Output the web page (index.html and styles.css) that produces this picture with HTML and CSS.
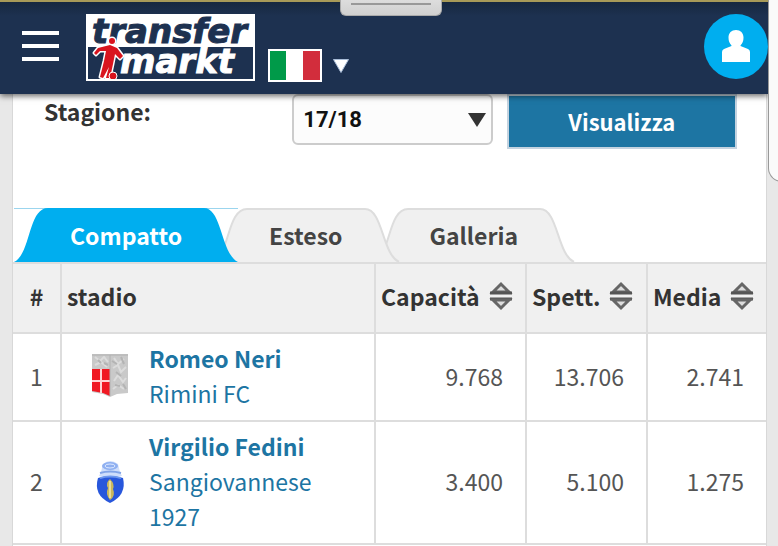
FILE: index.html
```
<!DOCTYPE html>
<html lang="it">
<head>
<meta charset="utf-8">
<meta name="viewport" content="width=device-width, initial-scale=1">
<title>Stadi - Transfermarkt</title>
<link rel="stylesheet" href="styles.css">
</head>
<body>
<header class="topbar">
  <button class="menu" type="button" aria-label="Menu"><span class="bar"></span><span class="bar"></span><span class="bar"></span></button>
  <a class="logo" href="#" aria-label="transfermarkt">
    <svg width="169" height="67" viewBox="0 0 169 67">
      <rect width="169" height="67" fill="#fff"/>
      <rect x="2" y="33" width="165" height="32" fill="#1d3150"/>
      <text class="logo-text" x="6" y="29" fill="#1d3150" stroke="#1d3150">transfer</text>
      <text class="logo-text" x="34" y="59" fill="#fff" stroke="#fff">markt</text>
      <g stroke="#fff" stroke-width="3" stroke-linejoin="round" stroke-linecap="round" fill="#fff">
        <circle cx="26" cy="27" r="3"/>
        <path d="M24 31L12 34L8 39L10 41L14 37L20 37L18 47L14 63L17 64L23 53L20 64L24 64L27 50L29 40L34 45L37 42L31 34Z"/>
      </g>
      <circle cx="26" cy="27" r="3" fill="#d9141e"/>
      <path d="M24 31L12 34L8 39L10 41L14 37L20 37L18 47L14 63L17 64L23 53L20 64L24 64L27 50L29 40L34 45L37 42L31 34Z" fill="#d9141e"/>
      <circle cx="27" cy="62" r="4" fill="#d9141e" stroke="#fff"/>
      <rect x="1" y="1" width="167" height="65" fill="none" stroke="#fff" stroke-width="2"/>
    </svg>
  </a>
  <button class="language" type="button" aria-label="Italia">
    <svg width="54" height="33" viewBox="0 0 54 33"><path fill="#fff" d="M0 0h54v33H0z"/><path fill="#009a49" d="M2 2h16v29H2z"/><path fill="#d22d3c" d="M35 2h17v29H35z"/></svg>
    <svg width="16" height="14" viewBox="0 0 16 14"><path fill="#fff" stroke="#a9bdd8" d="M.5.500h15L8 13.500z"/></svg>
  </button>
  <a class="account" href="#" aria-label="Profilo">
    <svg width="28" height="33" viewBox="0 0 28 33"><path fill="#fff" d="M14 0C9.500 0 6.500 3 6.500 7.500C6.500 11 7.500 13 9.500 15.500V16L2 19Q0 20 0 22V32H28V22Q28 20 26 19L18.500 16V15.500C20.500 13 21.500 11 21.500 7.500C21.500 3 18.500 0 14 0Z"/></svg>
  </a>
</header>
<div class="pull-handle"></div>
<div class="side-panel"></div>

<main class="content">
  <form class="filter">
    <label for="season">Stagione:</label>
    <div class="select-wrap">
      <select id="season"><option>17/18</option></select>
      <svg class="select-arrow" width="18" height="14" viewBox="0 0 18 14"><path fill="#333" d="M0 0h18L9 14z"/></svg>
    </div>
    <button class="submit" type="button">Visualizza</button>
  </form>

  <nav class="tabs">
    <a class="tab active" href="#">
      <svg class="edge" viewBox="0 0 34 54"><path d="M0 54C17 46 14 0 34 0V54Z"/></svg>
      <span>Compatto</span>
      <svg class="edge" viewBox="0 0 34 54"><path d="M34 54C17 46 18 0 0 0V54Z"/></svg>
    </a>
    <a class="tab second" href="#">
      <svg class="edge" viewBox="0 0 34 54"><path d="M0 54C17 46 14 1 34 1V54Z"/><path class="line" d="M0 54C17 46 14 1 34 1"/></svg>
      <span>Esteso</span>
      <svg class="edge" viewBox="0 0 34 54"><path d="M34 54C17 46 18 1 0 1V54Z"/><path class="line" d="M34 54C17 46 18 1 0 1"/></svg>
    </a>
    <a class="tab" href="#">
      <svg class="edge" viewBox="0 0 34 54"><path d="M0 54C17 46 14 1 34 1V54Z"/><path class="line" d="M0 54C17 46 14 1 34 1"/></svg>
      <span>Galleria</span>
      <svg class="edge" viewBox="0 0 34 54"><path d="M34 54C17 46 18 1 0 1V54Z"/><path class="line" d="M34 54C17 46 18 1 0 1"/></svg>
    </a>
  </nav>

  <table class="stadiums">
    <colgroup><col class="c-rank"><col class="c-name"><col class="c-cap"><col class="c-spett"><col class="c-media"></colgroup>
    <thead>
      <tr>
        <th class="rank">#</th>
        <th>stadio</th>
        <th><div class="sort">Capacità <svg width="22" height="28" viewBox="0 0 22 28"><path d="M3 10L11 2L19 10Z" fill="#ddd" stroke="#666" stroke-width="3"/><path d="M0 11h22M0 17h22" stroke="#555" stroke-width="3"/><path d="M3 18L11 26L19 18Z" fill="#ddd" stroke="#666" stroke-width="3"/></svg></div></th>
        <th><div class="sort">Spett. <svg width="22" height="28" viewBox="0 0 22 28"><path d="M3 10L11 2L19 10Z" fill="#ddd" stroke="#666" stroke-width="3"/><path d="M0 11h22M0 17h22" stroke="#555" stroke-width="3"/><path d="M3 18L11 26L19 18Z" fill="#ddd" stroke="#666" stroke-width="3"/></svg></div></th>
        <th><div class="sort">Media <svg width="22" height="28" viewBox="0 0 22 28"><path d="M3 10L11 2L19 10Z" fill="#ddd" stroke="#666" stroke-width="3"/><path d="M0 11h22M0 17h22" stroke="#555" stroke-width="3"/><path d="M3 18L11 26L19 18Z" fill="#ddd" stroke="#666" stroke-width="3"/></svg></div></th>
      </tr>
    </thead>
    <tbody>
      <tr>
        <td class="rank">1</td>
        <td>
          <div class="venue">
            <svg class="crest" width="36" height="44" viewBox="0 0 36 44">
              <path d="M0 0H36V39L25 40L18 43L11 40L0 38Z" fill="#c9c9c9"/>
              <path d="M3 3l5 4 4-4 4 5M3 11l6-3 6 5M22 4l4 6 6-5M21 14l5-3 3 7 5-5M22 27l4-6 5 7 3-4M21 35l5-4 6 4" fill="none" stroke="#dcdcdc" stroke-width="2"/>
              <path d="M20 7l5 3M29 3l3 7M24 18l5 4M31 30l3 5M6 6l3 3M12 9l4 2M23 31l5 1" stroke="#b4b4b4" stroke-width="2"/>
              <path d="M0 15H18V42L11 39L0 37Z" fill="#f01923"/>
              <path d="M9 15V39M0 27H18" stroke="#ffd5d5" stroke-width="2"/>
              <path d="M0 1H36M18 1V42" stroke="#b2b2b2" stroke-width="1"/>
            </svg>
            <div class="names"><a class="stadium" href="#">Romeo Neri</a><a href="#">Rimini FC</a></div>
          </div>
        </td>
        <td class="num">9.768</td><td class="num">13.706</td><td class="num">2.741</td>
      </tr>
      <tr>
        <td class="rank">2</td>
        <td>
          <div class="venue">
            <svg class="crest" width="36" height="44" viewBox="0 0 36 44">
              <path d="M9 12L11 4Q18-2 26 4L28 12L30 16H7Z" fill="#cfdefb"/>
              <ellipse cx="18" cy="6" rx="8" ry="4" fill="#8fb0f1"/>
              <ellipse cx="18" cy="6" rx="5" ry="2" fill="none" stroke="#dce8ff"/>
              <path d="M8 13Q18 10 29 13" stroke="#82a4e7" fill="none" stroke-width="2"/>
              <path d="M6 18Q18 14 31 18Q35 35 18 43Q1 35 6 18Z" fill="#2857dc"/>
              <path d="M8 18Q18 15 29 18" stroke="#6d97ee" fill="none" stroke-width="2"/>
              <path d="M18 19Q23 24 21 29Q24 36 18 40Q13 34 16 28Q13 23 18 19Z" fill="#c9b75c"/>
              <path d="M18 21V38" stroke="#e8dc9c" stroke-width="2"/>
            </svg>
            <div class="names"><a class="stadium" href="#">Virgilio Fedini</a><a href="#">Sangiovannese 1927</a></div>
          </div>
        </td>
        <td class="num">3.400</td><td class="num">5.100</td><td class="num">1.275</td>
      </tr>
    </tbody>
  </table>
</main>
</body>
</html>
```
FILE: styles.css
```
* { box-sizing: border-box; }

body {
  margin: 0;
  min-height: 100vh;
  display: flex;
  flex-direction: column;
  background: #e8e8e8;
  color: #333;
  font: 23px/35px "Noto Sans CJK SC", "Open Sans", sans-serif;
  overflow: hidden;
}

a { color: #1d75a3; text-decoration: none; }
svg { display: block; flex: none; overflow: visible; }
button { border: 0; padding: 0; background: none; font: inherit; cursor: pointer; }

.topbar {
  display: flex;
  align-items: flex-start;
  height: 94px;
  margin-right: 10px;
  padding: 12px 0 0 22px;
  border-top: 2px solid #a79a58;
  background: linear-gradient(#16283f, #1d3150 14px);
  box-shadow: 0 2px 6px rgba(0, 0, 0, .6);
  position: relative;
  z-index: 1;
}

.menu {
  display: flex;
  flex-direction: column;
  gap: 9px;
  width: 37px;
  margin: 17px 27px 0 0;
}

.bar { height: 4px; background: #fff; }

.logo-text {
  font: italic bold 34px "DejaVu Sans", sans-serif;
  stroke-width: 1px;
}

.language {
  display: flex;
  align-items: center;
  gap: 11px;
  margin: 35px 0 0 13px;
}

.account {
  display: flex;
  align-items: center;
  justify-content: center;
  width: 64px;
  height: 65px;
  margin-left: auto;
  border-radius: 50%;
  background: #00aeef;
}

.pull-handle {
  position: absolute;
  top: 0;
  left: 340px;
  z-index: 2;
  width: 102px;
  height: 16px;
  border: 1px solid #aaa;
  border-top: 0;
  border-radius: 0 0 6px 6px;
  background: linear-gradient(#999, #999) center 3px / 80px 2px no-repeat, linear-gradient(#ddd, #d0d0d0);
}

.side-panel {
  position: absolute;
  top: 0;
  right: -30px;
  z-index: 2;
  width: 40px;
  height: 182px;
  border: 1px solid #999;
  border-top: 0;
  border-radius: 0 0 12px 14px;
  background: #fafafa;
}

.content {
  flex: 1;
  margin: 0 11px 0 12px;
  border: solid #d8d8d8;
  border-width: 0 1px;
  background: #fff;
}

.filter {
  display: grid;
  grid-template-columns: 234fr 200fr 230fr;
  gap: 14px;
  align-items: start;
  padding: 0 29px 0 31px;
  height: 114px;
  font-weight: bold;
}

.select-wrap { position: relative; }

.select-wrap select {
  display: block;
  width: 100%;
  height: 51px;
  padding: 0 9px;
  border: 2px solid #ccc;
  border-radius: 6px;
  appearance: none;
  background: #fcfcfc;
  color: #111;
  font: bold 22px Roboto, sans-serif;
}

.select-arrow { position: absolute; right: 7px; top: 19px; pointer-events: none; }

.submit {
  height: 55px;
  border: 2px solid #c4d3e0;
  background: #1d75a3;
  color: #fff;
  font-size: 22px;
  font-weight: bold;
}

.tabs { display: flex; padding-left: 1px; }

.tab {
  display: flex;
  height: 54px;
  color: #444;
  font-weight: bold;
  position: relative;
}

.tab + .tab { margin-left: -25px; }
.tab.active { z-index: 2; color: #fff; }
.tab.second { z-index: 1; }

.tab span {
  padding: 0 22px;
  border-top: 2px solid #ddd;
  background: #f0f0f0;
  line-height: 51px;
}

.tab .edge { width: 34px; height: 54px; fill: #f0f0f0; }
.tab .line { fill: none; stroke: #ddd; stroke-width: 2px; }
.tab.active span { border-color: #00aeef; background: #00aeef; }
.tab.active .edge { fill: #00aeef; background: linear-gradient(#9bd5ee, #9bd5ee) top / 100% 1px no-repeat; }

.stadiums {
  width: 100%;
  border-collapse: collapse;
  table-layout: fixed;
}

.c-rank { width: 48px; }
.c-cap { width: 151px; }
.c-spett { width: 121px; }
.c-media { width: 119px; }

.stadiums th, .stadiums td {
  padding: 7px 6px 9px;
  border: 2px solid #ddd;
  border-width: 2px 0 2px 2px;
}

.stadiums th:first-child, .stadiums td:first-child { border-left: 0; }

.stadiums th {
  height: 70px;
  padding: 6px 5px 10px;
  background: #f0f0f0;
  text-align: left;
}

.stadiums .rank { padding-right: 0; padding-left: 0; text-align: center; color: #555; }
.stadiums th.rank { color: #333; }
.stadiums .num { padding-right: 22px; text-align: right; color: #555; }

.sort { display: flex; align-items: center; gap: 10px; }

.venue { display: flex; align-items: center; gap: 21px; padding-left: 24px; }
.names { display: flex; flex-direction: column; width: 180px; }
.stadium { font-weight: bold; }
```
